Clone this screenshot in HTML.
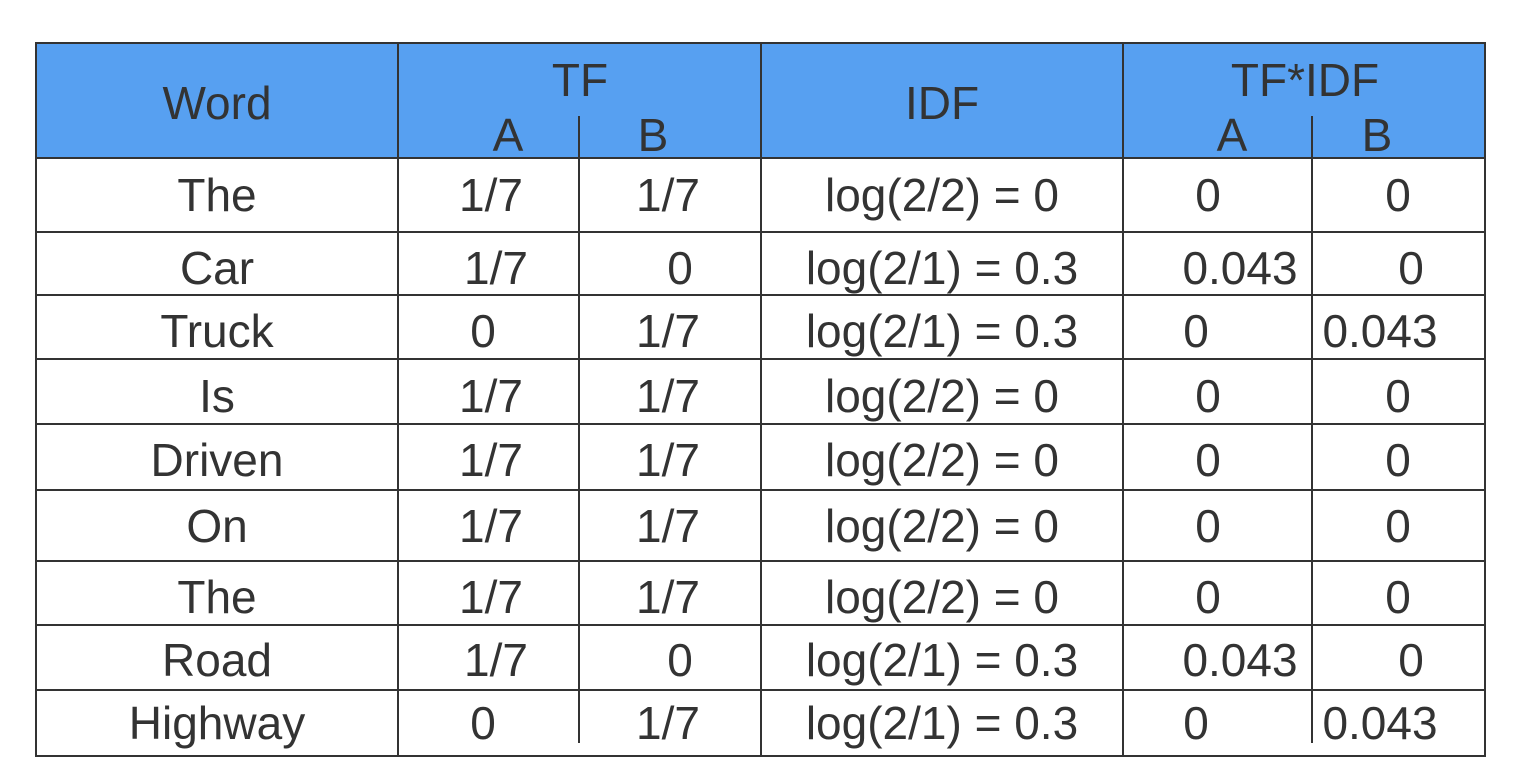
<!DOCTYPE html><html><head><style>
body{margin:0;width:1534px;height:780px;background:#fff;position:relative;overflow:hidden;font-family:"Liberation Sans",sans-serif;color:#333}
.h{position:absolute;background:#333}
.t{position:absolute;transform:translate(-50%,-50%);font-size:46px;line-height:1;white-space:nowrap}
</style></head><body>
<div style="position:absolute;left:36px;top:43px;width:1449px;height:115px;background:#57a0f1"></div>
<div class="h" style="left:35px;top:42px;width:1451px;height:2px"></div>
<div class="h" style="left:35px;top:755px;width:1451px;height:2px"></div>
<div class="h" style="left:35px;top:42px;width:2px;height:715px"></div>
<div class="h" style="left:1484px;top:42px;width:2px;height:715px"></div>
<div class="h" style="left:36px;top:157px;width:1449px;height:2px"></div>
<div class="h" style="left:36px;top:231px;width:1449px;height:2px"></div>
<div class="h" style="left:36px;top:294px;width:1449px;height:2px"></div>
<div class="h" style="left:36px;top:358px;width:1449px;height:2px"></div>
<div class="h" style="left:36px;top:423px;width:1449px;height:2px"></div>
<div class="h" style="left:36px;top:489px;width:1449px;height:2px"></div>
<div class="h" style="left:36px;top:560px;width:1449px;height:2px"></div>
<div class="h" style="left:36px;top:624px;width:1449px;height:2px"></div>
<div class="h" style="left:36px;top:689px;width:1449px;height:2px"></div>
<div class="h" style="left:397px;top:43px;width:2px;height:713px"></div>
<div class="h" style="left:760px;top:43px;width:2px;height:713px"></div>
<div class="h" style="left:1122px;top:43px;width:2px;height:713px"></div>
<div class="h" style="left:578px;top:116px;width:2px;height:627px"></div>
<div class="h" style="left:1311px;top:116px;width:2px;height:627px"></div>
<span class="t" style="left:217px;top:103px">Word</span>
<span class="t" style="left:580px;top:80px">TF</span>
<span class="t" style="left:508px;top:135px">A</span>
<span class="t" style="left:653px;top:135px">B</span>
<span class="t" style="left:942px;top:103px">IDF</span>
<span class="t" style="left:1305px;top:80px">TF*IDF</span>
<span class="t" style="left:1232px;top:135px">A</span>
<span class="t" style="left:1377px;top:135px">B</span>
<span class="t" style="left:217px;top:195px">The</span><span class="t" style="left:491px;top:195px">1/7</span><span class="t" style="left:668px;top:195px">1/7</span><span class="t" style="left:942px;top:195px">log(2/2) = 0</span><span class="t" style="left:1208px;top:195px">0</span><span class="t" style="left:1398px;top:195px">0</span>
<span class="t" style="left:217px;top:268px">Car</span><span class="t" style="left:496px;top:268px">1/7</span><span class="t" style="left:680px;top:268px">0</span><span class="t" style="left:942px;top:268px">log(2/1) = 0.3</span><span class="t" style="left:1240px;top:268px">0.043</span><span class="t" style="left:1411px;top:268px">0</span>
<span class="t" style="left:217px;top:331px">Truck</span><span class="t" style="left:483px;top:331px">0</span><span class="t" style="left:668px;top:331px">1/7</span><span class="t" style="left:942px;top:331px">log(2/1) = 0.3</span><span class="t" style="left:1196px;top:331px">0</span><span class="t" style="left:1380px;top:331px">0.043</span>
<span class="t" style="left:217px;top:396px">Is</span><span class="t" style="left:491px;top:396px">1/7</span><span class="t" style="left:668px;top:396px">1/7</span><span class="t" style="left:942px;top:396px">log(2/2) = 0</span><span class="t" style="left:1208px;top:396px">0</span><span class="t" style="left:1398px;top:396px">0</span>
<span class="t" style="left:217px;top:460px">Driven</span><span class="t" style="left:491px;top:460px">1/7</span><span class="t" style="left:668px;top:460px">1/7</span><span class="t" style="left:942px;top:460px">log(2/2) = 0</span><span class="t" style="left:1208px;top:460px">0</span><span class="t" style="left:1398px;top:460px">0</span>
<span class="t" style="left:217px;top:526px">On</span><span class="t" style="left:491px;top:526px">1/7</span><span class="t" style="left:668px;top:526px">1/7</span><span class="t" style="left:942px;top:526px">log(2/2) = 0</span><span class="t" style="left:1208px;top:526px">0</span><span class="t" style="left:1398px;top:526px">0</span>
<span class="t" style="left:217px;top:597px">The</span><span class="t" style="left:491px;top:597px">1/7</span><span class="t" style="left:668px;top:597px">1/7</span><span class="t" style="left:942px;top:597px">log(2/2) = 0</span><span class="t" style="left:1208px;top:597px">0</span><span class="t" style="left:1398px;top:597px">0</span>
<span class="t" style="left:217px;top:660px">Road</span><span class="t" style="left:496px;top:660px">1/7</span><span class="t" style="left:680px;top:660px">0</span><span class="t" style="left:942px;top:660px">log(2/1) = 0.3</span><span class="t" style="left:1240px;top:660px">0.043</span><span class="t" style="left:1411px;top:660px">0</span>
<span class="t" style="left:217px;top:723px">Highway</span><span class="t" style="left:483px;top:723px">0</span><span class="t" style="left:668px;top:723px">1/7</span><span class="t" style="left:942px;top:723px">log(2/1) = 0.3</span><span class="t" style="left:1196px;top:723px">0</span><span class="t" style="left:1380px;top:723px">0.043</span>
</body></html>
